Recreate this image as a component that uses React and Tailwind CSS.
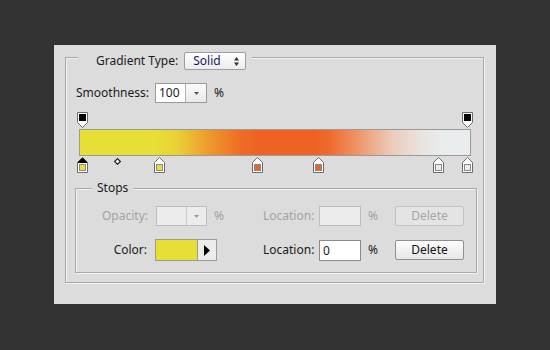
import React from "react";

const font = { fontFamily: '"Noto Sans", "Open Sans", sans-serif' };

const bottomStops = [
  { p: 0, color: "#e8df36", selected: true },
  { p: 0.2, color: "#e8df36" },
  { p: 0.455, color: "#ee6223" },
  { p: 0.615, color: "#ee6223" },
  { p: 0.925, color: "#e8ecec" },
  { p: 1, color: "#e8ecec" },
];

const BottomStop = ({ p, color, selected }) => (
  <svg
    width="11"
    height="16"
    viewBox="0 0 11 16"
    className="absolute top-0"
    style={{ left: `${p * 385 - 2.5}px` }}
  >
    <path d="M0.5 5.5 L5.5 0.5 L10.5 5.5 V15.5 H0.5 Z" fill="#fff" stroke="#6b6b6b" />
    {selected && <path d="M1 5.5 L5.5 1 L10 5.5 Z" fill="#000" stroke="#000" />}
    <rect x="2.5" y="7.5" width="6" height="6" fill={color} stroke="#8a8a8a" />
  </svg>
);

const TopStop = ({ p }) => (
  <svg
    width="11"
    height="16"
    viewBox="0 0 11 16"
    className="absolute top-0"
    style={{ left: `${p * 385 - 2.5}px` }}
  >
    <path d="M0.5 0.5 H10.5 V10.5 L5.5 15.5 L0.5 10.5 Z" fill="#fff" stroke="#6b6b6b" />
    <rect x="2" y="2" width="7" height="7" fill="#000" />
  </svg>
);

const DownArrow = ({ color = "#555" }) => (
  <svg width="5" height="3" viewBox="0 0 5 3">
    <path d="M0 0 H5 L2.5 3 Z" fill={color} />
  </svg>
);

const Button = ({ children, disabled }) => (
  <button
    className={`w-[69px] h-[20px] rounded-[2px] border text-[12px] leading-none ${
      disabled
        ? "border-[#c2c2c2] bg-[#e4e4e4] text-[#a6a6a6]"
        : "border-[#8f8f8f] bg-[linear-gradient(#fdfdfd,#e6e6e6)] text-[#111]"
    }`}
  >
    {children}
  </button>
);

export default function App() {
  return (
    <div className="w-[550px] h-[350px] bg-[#333333] pt-[45px] pl-[54px] text-[12px] text-[#1b1b1b]" style={font}>
      <div className="w-[442px] h-[259px] bg-[#dcdcdc] pt-[12px] pl-[11px]">
        <div className="relative w-[419px] h-[226px] border border-[#a9a9a9] shadow-[inset_1px_1px_0_#f2f2f2,1px_1px_0_#f2f2f2] pl-[10px] pr-[12px] pt-[25px]">
          <div className="absolute left-[12px] top-[-6px] flex items-center bg-[#dcdcdc] pl-[18px] pr-[6px]">
            <span className="mr-[6px]">Gradient Type:</span>
            <div className="w-[62px] h-[18px] rounded-[2px] border border-[#9d9d9d] bg-[linear-gradient(#ffffff,#ececec)] flex items-center justify-between pl-[8px] pr-[6px]">
              <span className="text-[#1a1a5a]">Solid</span>
              <svg width="5" height="9" viewBox="0 0 5 9">
                <path d="M0 3.5 L2.5 0 L5 3.5 Z M0 5.5 H5 L2.5 9 Z" fill="#333" />
              </svg>
            </div>
          </div>

          <div className="flex items-center h-[20px]">
            <span className="w-[79px]">Smoothness:</span>
            <div className="flex h-[20px] w-[52px] border border-[#9a9a9a] bg-white">
              <span className="w-[29px] pl-[3px] leading-[18px]">100</span>
              <div className="flex-1 border-l border-[#b0b0b0] bg-[linear-gradient(#fbfbfb,#e9e9e9)] flex items-center justify-center">
                <DownArrow />
              </div>
            </div>
            <span className="ml-[7px]">%</span>
          </div>

          <div className="relative ml-[3px] mt-[9px] w-[392px] h-[61px]">
            <TopStop p={0} />
            <TopStop p={1} />
            <div className="absolute top-[17px] left-0 w-[392px] h-[27px] border border-[#9a9a9a] bg-[linear-gradient(to_right,#e8df36_0%,#e8df36_19%,#e9d036_25%,#ee9a2c_33%,#ef6d25_41%,#ee6223_46%,#ee6223_60%,#ef6a2c_64%,#ee9a70_72%,#ebccbb_80%,#e8e5e2_88%,#e8ecec_93%,#e8ecec_100%)]" />
            <div className="absolute top-[45px] left-0 w-[392px] h-[16px]">
              {bottomStops.map((s, i) => (
                <BottomStop key={i} {...s} />
              ))}
              <svg width="7" height="7" viewBox="0 0 7 7" className="absolute top-[1px] left-[35px]">
                <path d="M3.5 0.7 L6.3 3.5 L3.5 6.3 L0.7 3.5 Z" fill="#fff" stroke="#222" strokeWidth="1.2" />
              </svg>
            </div>
          </div>

          <div className="relative ml-[-1px] mt-[15px] w-[402px] h-[85px] border border-[#a9a9a9] shadow-[inset_1px_1px_0_#f2f2f2,1px_1px_0_#f2f2f2] pt-[17px]">
            <span className="absolute left-[16px] top-[-10px] bg-[#dcdcdc] px-[5px] leading-[18px]">Stops</span>

            <div className="flex items-center h-[20px] text-[#a3a3a3]">
              <span className="w-[72px] text-right">Opacity:</span>
              <div className="ml-[8px] flex h-[20px] w-[51px] border border-[#bdbdbd] bg-[#ececec]">
                <span className="w-[29px]" />
                <div className="flex-1 border-l border-[#c8c8c8] flex items-center justify-center">
                  <DownArrow color="#9a9a9a" />
                </div>
              </div>
              <span className="ml-[7px] w-[49px]">%</span>
              <span className="w-[56px]">Location:</span>
              <div className="h-[20px] w-[42px] border border-[#bdbdbd] bg-[#ececec]" />
              <span className="ml-[7px] w-[27px]">%</span>
              <Button disabled>Delete</Button>
            </div>

            <div className="flex items-center h-[22px] mt-[13px]">
              <span className="w-[71px] text-right">Color:</span>
              <div className="ml-[8px] flex h-[22px] w-[62px] border border-[#9a9a9a]">
                <div className="w-[42px] bg-[#e8df36] border-r border-[#9a9a9a]" />
                <div className="flex-1 bg-[#ececec] flex items-center justify-center">
                  <svg width="6" height="11" viewBox="0 0 6 11">
                    <path d="M0 0 L6 5.5 L0 11 Z" fill="#000" />
                  </svg>
                </div>
              </div>
              <span className="w-[46px]" />
              <span className="w-[56px]">Location:</span>
              <div className="h-[21px] w-[42px] border border-[#8a8a8a] bg-white pl-[3px] leading-[19px]">0</div>
              <span className="ml-[7px] w-[27px]">%</span>
              <Button>Delete</Button>
            </div>
          </div>
        </div>
      </div>
    </div>
  );
}
